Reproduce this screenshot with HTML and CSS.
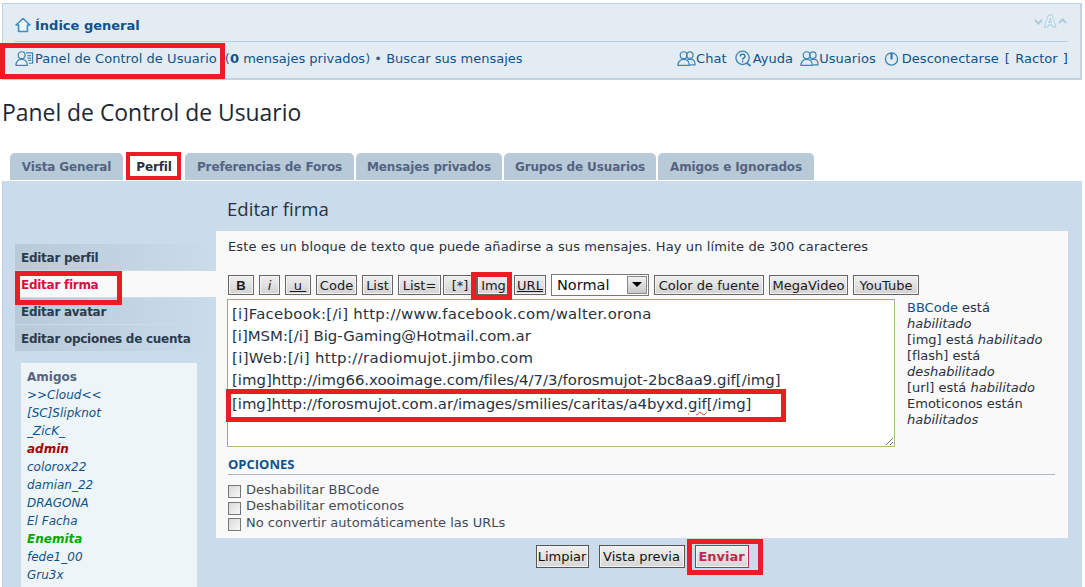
FILE: index.html
```html
<!DOCTYPE html>
<html lang="es">
<head>
<meta charset="utf-8">
<title>Panel de Control de Usuario</title>
<link rel="stylesheet" href="styles.css">
</head>
<body>
<div class="navbar">
  <div class="nav-top">
    <a class="crumb" href="#">
      <svg class="ic-home" viewBox="0 0 16 16" width="16" height="16"><path d="M1 8 8 1.500 15 8h-2.600v6.500H3.600V8Z" fill="#eef3f7" stroke="#3a8fc0" stroke-width="1.600" stroke-linejoin="round"/></svg>
      Índice general
    </a>
    <svg class="ic-font" viewBox="0 0 36 18" width="36" height="18"><path d="M2 8 5.500 11.500 9 8" fill="none" stroke="#a9cbe2" stroke-width="2"/><path d="M26 11 29.500 7.500 33 11" fill="none" stroke="#a9cbe2" stroke-width="2"/><text class="ic-font-a" x="17" y="15" text-anchor="middle">A</text></svg>
  </div>
  <div class="nav-bottom">
    <div class="links">
      <a class="ic-link ucp" href="#">
        <svg viewBox="0 0 20 17" width="19" height="17"><g fill="none" stroke="#3d86b4" stroke-width="1.300"><path d="M11.500 2.500h7v11h-4M13 5.500h4M13 8h4M14 10.500h3"/><circle cx="7" cy="5" r="3.600"/><path d="M1 15.800c0-4 2.500-6.300 6-6.300s6 2.300 6 6.300Z" fill="#eef3f7"/></g></svg>
        Panel de Control de Usuario
      </a>
      <span class="after-ucp">(<b>0</b> <a href="#">mensajes privados</a>) • <a href="#">Buscar sus mensajes</a></span>
    </div>
    <div class="links right">
      <a class="ic-link" href="#"><svg viewBox="0 0 20 17" width="19" height="17"><use href="#group"/></svg>Chat</a>
      <a class="ic-link" href="#"><svg viewBox="0 0 20 17" width="19" height="17"><circle cx="9" cy="7.800" r="7" fill="none" stroke="#3d86b4" stroke-width="1.400"/><path d="M13 13 17.500 16.500" stroke="#3d86b4" stroke-width="2"/><path d="M6.600 6.300c0-3.200 5-3.200 5 0 0 1.600-2.500 1.600-2.500 3.400M9.100 10.800v1.700" fill="none" stroke="#2a76a8" stroke-width="1.500"/></svg>Ayuda</a>
      <a class="ic-link" href="#"><svg viewBox="0 0 20 17" width="19" height="17"><g id="group" fill="none" stroke="#3d86b4" stroke-width="1.300"><circle cx="13.500" cy="5" r="3.400"/><path d="M11 9.500h5c2 .5 3 2.500 3 5.800h-6"/><circle cx="7" cy="5" r="3.600"/><path d="M1 15.800c0-4 2.500-6.300 6-6.300s6 2.300 6 6.300Z" fill="#e4ecf3"/></g></svg>Usuarios</a>
      <a class="ic-link off" href="#"><svg viewBox="0 0 16 16" width="15" height="15"><circle cx="8" cy="8.500" r="6.500" fill="none" stroke="#3d86b4" stroke-width="1.400"/><path d="M8 2v7" stroke="#2a76a8" stroke-width="2.200"/></svg>Desconectarse</a>
      <span class="user">[ <a href="#">Ractor</a> ]</span>
    </div>
  </div>
</div>

<h2 class="page-title">Panel de Control de Usuario</h2>

<nav class="tabs">
  <a class="tab t1" href="#">Vista General</a>
  <a class="tab active t2" href="#">Perfil</a>
  <a class="tab t3" href="#">Preferencias de Foros</a>
  <a class="tab t4" href="#">Mensajes privados</a>
  <a class="tab t5" href="#">Grupos de Usuarios</a>
  <a class="tab t6" href="#">Amigos e Ignorados</a>
</nav>

<div class="panel">
  <aside class="side">
    <ul class="menu">
      <li>Editar perfil</li>
      <li class="cur">Editar firma</li>
      <li>Editar avatar</li>
      <li>Editar opciones de cuenta</li>
    </ul>
    <div class="friends">
      <div class="friends-h">Amigos</div>
      <a href="#">&gt;&gt;Cloud&lt;&lt;</a>
      <a href="#">[SC]Slipknot</a>
      <a href="#">_ZicK_</a>
      <a class="red" href="#">admin</a>
      <a href="#">colorox22</a>
      <a href="#">damian_22</a>
      <a href="#">DRAGONA</a>
      <a href="#">El Facha</a>
      <a class="green" href="#">Enemita</a>
      <a href="#">fede1_00</a>
      <a href="#">Gru3x</a>
    </div>
  </aside>

  <main class="main">
    <h3 class="sec-title">Editar firma</h3>
    <div class="card">
      <p class="intro">Este es un bloque de texto que puede añadirse a sus mensajes. Hay un límite de 300 caracteres</p>
      <div class="toolbar">
        <button class="bb b-b">B</button>
        <button class="bb b-i">i</button>
        <button class="bb b-u"><span>&nbsp;u&nbsp;</span></button>
        <button class="bb b-code">Code</button>
        <button class="bb b-list">List</button>
        <button class="bb b-liste">List=</button>
        <button class="bb b-star">[*]</button>
        <button class="bb b-img">Img</button>
        <button class="bb b-url"><span>URL</span></button>
        <div class="sel"><span>Normal</span><i class="arrow"></i></div>
        <button class="bb b-color">Color de fuente</button>
        <button class="bb b-mega">MegaVideo</button>
        <button class="bb b-yt">YouTube</button>
      </div>
      <div class="editor">
        <div class="ta">
          <div class="l l1">[i]Facebook:[/i] http://www.facebook.com/walter.orona</div>
          <div class="l">[i]MSM:[/i] Big-Gaming@Hotmail.com.ar</div>
          <div class="l l3">[i]Web:[/i] http://radiomujot.jimbo.com</div>
          <div class="l">[img]http://img66.xooimage.com/files/4/7/3/forosmujot-2bc8aa9.gif[/img]</div>
          <div class="l last">[img]http://forosmujot.com.ar/images/smilies/caritas/a4byxd.<span class="sq">gif</span>[/img]</div>
          <svg class="grip" viewBox="0 0 8 8" width="8" height="8"><path d="M1 8 8 1M5 8 8 5" stroke="#777" stroke-width="1"/></svg>
        </div>
        <div class="status">
          <a href="#">BBCode</a> está <em>habilitado</em><br>
          [img] está <em>habilitado</em><br>
          [flash] está <em>deshabilitado</em><br>
          [url] está <em>habilitado</em><br>
          Emoticonos están <em>habilitados</em>
        </div>
      </div>
      <div class="opt-h">OPCIONES</div>
      <label class="opt"><i class="cb"></i>Deshabilitar BBCode</label>
      <label class="opt"><i class="cb"></i>Deshabilitar emoticonos</label>
      <label class="opt"><i class="cb"></i>No convertir automáticamente las URLs</label>
    </div>
    <div class="actions">
      <button class="act">Limpiar</button>
      <button class="act">Vista previa</button>
      <button class="act send">Enviar</button>
    </div>
  </main>
</div>

<div class="mark m1"></div>
<div class="mark m2"></div>
<div class="mark m3"></div>
<div class="mark m4"></div>
<div class="mark m5"></div>
<div class="mark m6"></div>
</body>
</html>
```
FILE: styles.css
```css
* { box-sizing: border-box; }
html, body { margin: 0; height: 587px; overflow: hidden; background: #fff; }
body { padding: 3px 3px 0 2px; font: 13px "DejaVu Sans", sans-serif; color: #28313f; position: relative; }
a { color: #105289; text-decoration: none; }

.navbar { height: 77px; background: #e4ecf3; border: 1px solid #bfd3e2; border-width: 1px 2px 2px 1px; padding: 0 12px; }
.nav-top { height: 38px; border-bottom: 1px solid #b9cedd; display: flex; justify-content: space-between; align-items: center; padding-top: 5px; }
.crumb { font-weight: bold; display: flex; align-items: center; gap: 4px; }
.ic-font { margin-top: -9px; margin-right: -1px; overflow: visible; }
.ic-font-a { font: bold 15px "DejaVu Sans", sans-serif; fill: #f2f6f9; stroke: #a9cbe2; stroke-width: .8px; }
.nav-bottom { height: 32px; display: flex; justify-content: space-between; align-items: center; color: #28437a; letter-spacing: .05px; }
.links { display: flex; align-items: center; white-space: nowrap; }
.ic-link { display: flex; align-items: center; }
.ucp svg { margin-right: 1px; }
.after-ucp { margin-left: 8px; color: #3a5a82; letter-spacing: 0; }
.after-ucp b { color: #105289; }
.right .ic-link { margin-left: 7px; }
.right .ic-link:first-child { margin-left: 0; }
.right .off { margin-left: 8px; }
.off svg { margin-right: 3px; }
.user { margin-left: 6px; color: #105289; word-spacing: 1px; }

.page-title { margin: 19px 0 0; height: 54px; font: normal 22.9px "Open Sans", "DejaVu Sans", sans-serif; color: #1c2733; line-height: 28px; }

.tabs { display: flex; height: 28px; padding-left: 8px; gap: 2px; }
.tab { height: 27px; line-height: 29px; background: #b8c9d8; border-radius: 5px 5px 0 0; font-weight: bold; font-size: 12px; letter-spacing: -.12px; color: #536482; text-align: center; }
.tab.active { background: #fff; color: #28313f; }
.t1 { width: 113px; } .t2 { width: 58px; } .t3 { width: 169px; } .t4 { width: 146px; } .t5 { width: 152px; } .t6 { width: 156px; }

.panel { height: 406px; background: #cadceb; border-left: 1px solid #bcd2e3; display: flex; padding: 0 14px 0 12px; overflow: hidden; }
.side { width: 201px; padding-top: 63px; flex: none; }
.menu { list-style: none; margin: 0; padding: 0; }
.menu li { height: 26px; line-height: 28px; margin-bottom: 1px; padding-left: 6px; font-weight: bold; font-size: 12px; letter-spacing: -.27px; color: #2d3a4c; background: linear-gradient(90deg, #b8c9d8, #cadceb); }
.menu li.cur { background: #f9f9f9; color: #d31141; }
.friends { margin: 12px 19px 0 6px; height: 240px; background: #eef5f9; padding: 6px 6px; font-size: 12px; }
.friends-h { font-weight: bold; color: #536482; height: 16px; line-height: 16px; margin-bottom: 1px; }
.friends a { display: block; font-style: italic; height: 18px; line-height: 18px; white-space: nowrap; }
.friends .red { color: #a00; font-weight: bold; }
.friends .green { color: #00aa00; font-weight: bold; }

.main { flex: 1; min-width: 0; }
.sec-title { margin: 0; height: 50px; padding: 16px 0 0 11px; font: normal 18.6px "Open Sans", "DejaVu Sans", sans-serif; color: #28313f; line-height: 24px; }
.card { height: 307px; background: #f9f9f9; padding: 0 12px 0 12px; }
.intro { margin: 0; height: 44px; padding-top: 8px; line-height: 16px; font-size: 13px; letter-spacing: .12px; white-space: nowrap; }

.toolbar { display: flex; height: 24px; align-items: flex-start; }
.bb { height: 20px; padding: 0; margin: 0 5px 0 0; border: 1px solid #666; background: linear-gradient(#efefef, #d2d2d2); font: 13px "DejaVu Sans", sans-serif; color: #1a1a1a; box-shadow: inset 0 0 0 1px #f4f4f4; flex: none; }
.b-b { width: 26px; font-weight: bold; font-family: "Liberation Sans", sans-serif; }
.b-i { width: 21px; font-style: italic; }
.b-u { width: 26px; } .b-u span, .b-url span { text-decoration: underline; }
.b-code { width: 41px; } .b-list { width: 31px; } .b-liste { width: 43px; margin-right: 2px; } .b-star { width: 34px; margin-right: 0; } .b-img { width: 33px; margin-right: 4px; } .b-url { width: 32px; }
.sel { width: 98px; height: 22px; margin: -1px 5px 0 0; background: #fff; border: 1px solid #777; padding: 0 1px 0 5px; display: flex; align-items: center; justify-content: space-between; font-size: 14.5px; color: #111; flex: none; }
.arrow { width: 20px; height: 18px; background: linear-gradient(#f2f2f2, #c8c8c8) ; border: 1px solid #888; position: relative; }
.arrow::after { content: ""; position: absolute; left: 4px; top: 5px; border: 5px solid transparent; border-top: 5px solid #000; border-bottom: 0; }
.b-color { width: 110px; } .b-mega { width: 79px; } .b-yt { width: 66px; margin-right: 0; }

.editor { display: flex; height: 148px; margin-left: -1px; }
.ta { width: 668px; height: 148px; flex: none; background: #fff; border: 1px solid; border-color: #a9a66a #a9c07a #b2bb74 #9fb36e; padding: 3px 4px; font-size: 14.9px; line-height: 22px; color: #28313f; white-space: nowrap; position: relative; }
.l1 { letter-spacing: .3px; }
.l3 { letter-spacing: .35px; }
.l.last { margin-top: 2px; letter-spacing: -.03px; }
.sq { text-decoration: underline wavy #d33; text-decoration-thickness: 1px; text-underline-offset: 2px; }
.grip { position: absolute; right: 1px; bottom: 1px; }
.status { width: 157px; padding: 1px 0 0 12px; line-height: 16px; font-size: 13px; }

.opt-h { margin-top: 9px; height: 19px; border-bottom: 1px solid #a9b8c2; width: 827px; color: #105289; font: bold 13px/16px "Open Sans", "DejaVu Sans", sans-serif; }
.opt { display: flex; align-items: center; height: 16.500px; font-size: 13px; color: #3f4b5c; }
.opt:first-of-type { margin-top: 6px; }
.cb { width: 13px; height: 13px; border: 1px solid #777; background: linear-gradient(135deg, #d8d8d8, #f8f8f8); margin-right: 5px; margin-top: 5px; }

.actions { display: flex; justify-content: center; gap: 10px; padding-top: 7px; }
.act { height: 23px; padding: 0; border: 1px solid #555; background: linear-gradient(#f0f0f0, #d6d6d6); font: 13px "DejaVu Sans", sans-serif; color: #111; width: 53px; box-shadow: inset 0 0 0 1px #f4f4f4; }
.act:nth-child(2) { width: 86px; }
.send { width: 54px; border-color: #bc2a4d; color: #bc2a4d; font-weight: bold; }

.mark { position: absolute; border: 5px solid #ed1c24; pointer-events: none; }
.m1 { left: 0; top: 43px; width: 225px; height: 36px; }
.m2 { left: 126px; top: 152px; width: 55px; height: 28px; border-width: 4px; }
.m3 { left: 15px; top: 271px; width: 107px; height: 34px; }
.m4 { left: 471px; top: 272px; width: 41px; height: 28px; }
.m5 { left: 226px; top: 389px; width: 560px; height: 33px; }
.m6 { left: 687px; top: 539px; width: 76px; height: 36px; }
```
